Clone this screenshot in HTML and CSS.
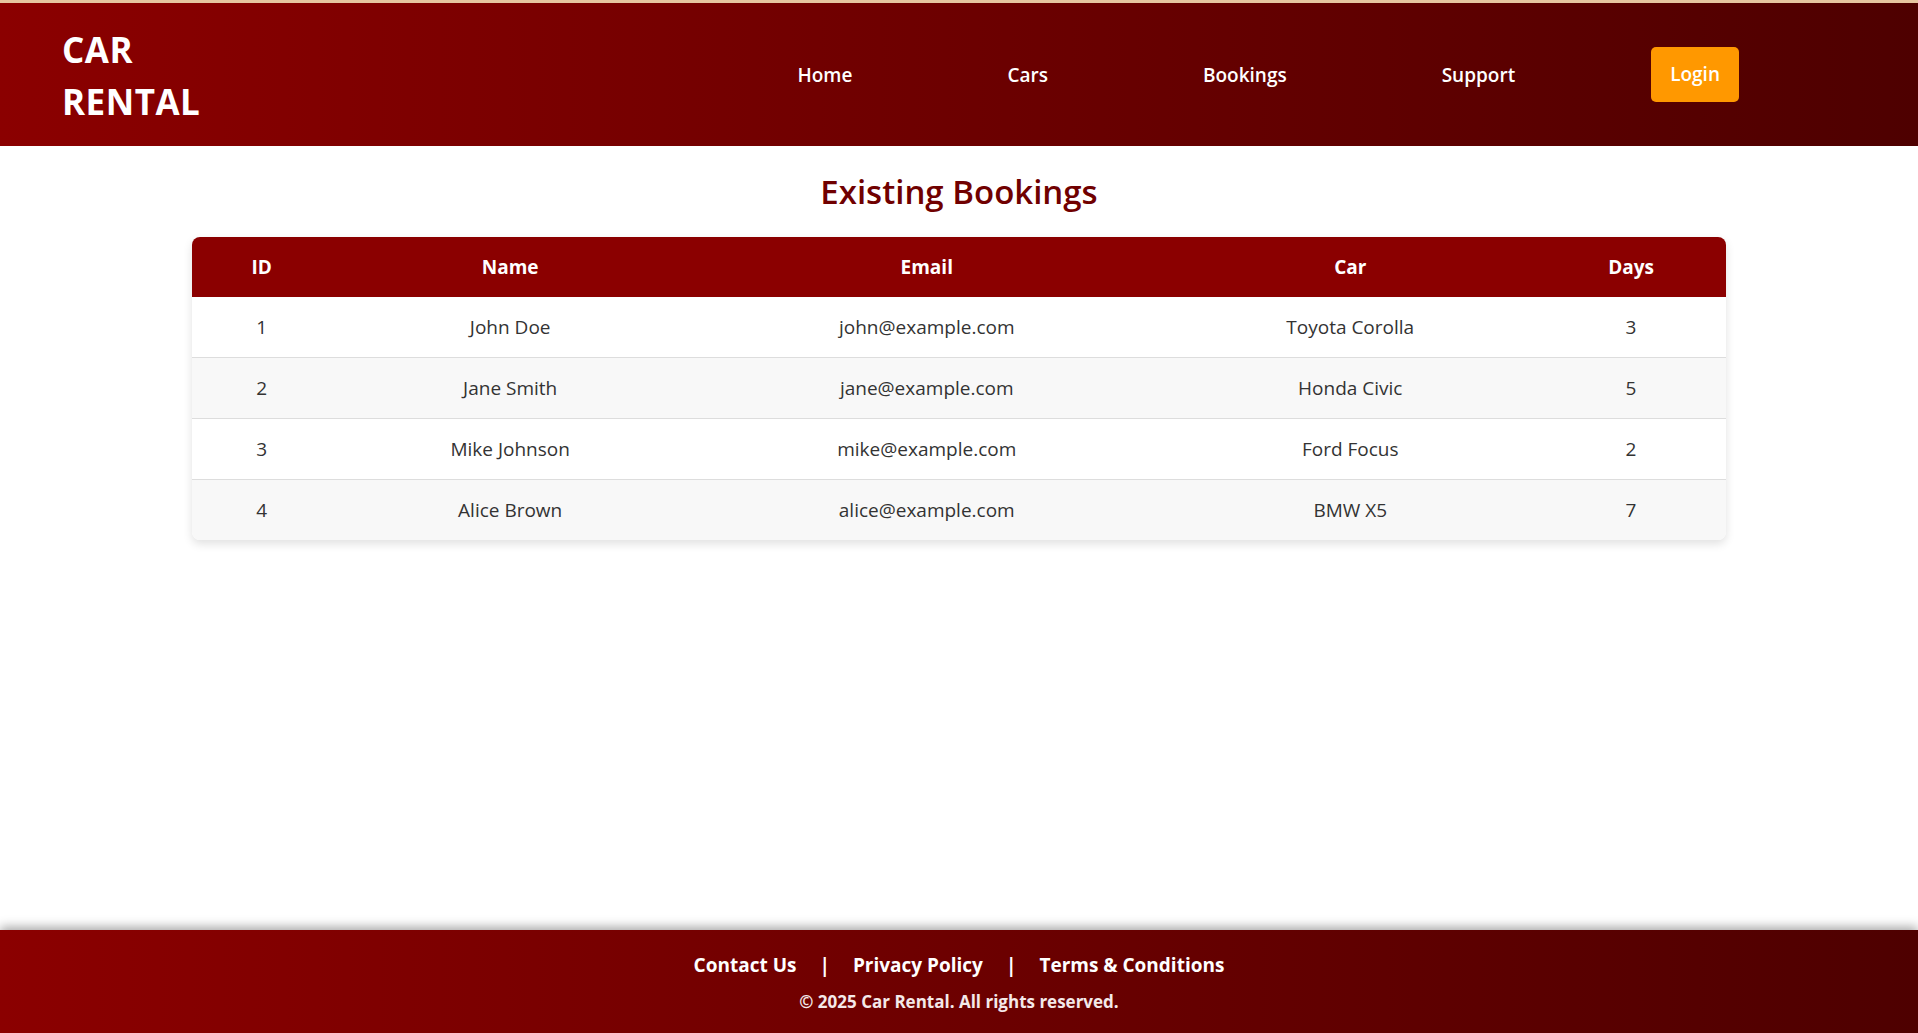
FILE: index.html
```html
<!DOCTYPE html>
<html lang="en">
<head>
<meta charset="utf-8">
<title>Car Rental - Bookings</title>
<link rel="stylesheet" href="styles.css">
</head>
<body>
<header class="site-header">
  <div class="logo">CAR RENTAL</div>
  <nav class="nav">
    <a class="nav-link" href="#">Home</a>
    <a class="nav-link" href="#">Cars</a>
    <a class="nav-link" href="#">Bookings</a>
    <a class="nav-link" href="#">Support</a>
    <a class="login-btn" href="#">Login</a>
  </nav>
</header>
<main class="content">
  <h2 class="page-title">Existing Bookings</h2>
  <table class="bookings">
    <colgroup>
      <col class="c-id"><col class="c-name"><col class="c-email"><col class="c-car"><col class="c-days">
    </colgroup>
    <thead>
      <tr><th>ID</th><th>Name</th><th>Email</th><th>Car</th><th>Days</th></tr>
    </thead>
    <tbody>
      <tr><td>1</td><td>John Doe</td><td>john@example.com</td><td>Toyota Corolla</td><td>3</td></tr>
      <tr><td>2</td><td>Jane Smith</td><td>jane@example.com</td><td>Honda Civic</td><td>5</td></tr>
      <tr><td>3</td><td>Mike Johnson</td><td>mike@example.com</td><td>Ford Focus</td><td>2</td></tr>
      <tr><td>4</td><td>Alice Brown</td><td>alice@example.com</td><td>BMW X5</td><td>7</td></tr>
    </tbody>
  </table>
</main>
<footer class="site-footer">
  <div class="footer-links">
    <a href="#">Contact Us</a><span class="sep">|</span><a href="#">Privacy Policy</a><span class="sep">|</span><a href="#">Terms &amp; Conditions</a>
  </div>
  <p class="copyright">&copy; 2025 Car Rental. All rights reserved.</p>
</footer>
</body>
</html>
```

FILE: styles.css
```css
* { box-sizing: border-box; }

html, body { height: 100%; }

body {
  margin: 0;
  font-family: "Open Sans", "Noto Sans", "Liberation Sans", sans-serif;
  color: #333;
  background: #fff;
  display: flex;
  flex-direction: column;
  min-height: 100vh;
  border-top: 3px solid #e6c6a0;
}

.site-header {
  height: 143px;
  background: linear-gradient(to right, #8b0000, #4e0000);
  display: flex;
  align-items: center;
  justify-content: space-between;
  padding: 0 179px 0 62px;
}

.logo {
  width: min-content;
  color: #fff;
  font-size: 35px;
  font-weight: 700;
  line-height: 52px;
  letter-spacing: 0.5px;
  margin-top: 2px;
}

.nav {
  display: flex;
  align-items: center;
  gap: 117px;
}

.nav-link {
  color: #fff;
  text-decoration: none;
  font-size: 19px;
  font-weight: 600;
  padding: 10px 19px;
}

.login-btn {
  display: inline-block;
  background: #ff9800;
  color: #fff;
  text-decoration: none;
  font-size: 19px;
  font-weight: 600;
  line-height: 27px;
  padding: 14px 19px;
  border-radius: 5px;
}

.content {
  flex: 1;
}

.page-title {
  margin: 25px 0 24px;
  text-align: center;
  color: #700000;
  font-size: 33px;
  font-weight: 600;
  line-height: 42px;
}

.bookings {
  width: 80%;
  margin: 0 auto;
  border-collapse: collapse;
  border-radius: 8px;
  overflow: hidden;
  box-shadow: 0 4px 10px rgba(0, 0, 0, 0.12);
  table-layout: fixed;
}

.c-id { width: 9.1%; }
.c-name { width: 23.3%; }
.c-email { width: 31%; }
.c-car { width: 24.2%; }
.c-days { width: 12.4%; }

.bookings th {
  background: #8b0000;
  color: #fff;
  font-size: 19px;
  font-weight: 700;
  line-height: 26px;
  padding: 17px 10px;
  text-align: center;
}

.bookings td {
  font-size: 19px;
  line-height: 26px;
  padding: 17px 10px;
  text-align: center;
  color: #333;
  border-bottom: 1px solid #ddd;
}

.bookings tbody tr:nth-child(even) td { background: #f8f8f8; }
.bookings tbody tr:last-child td { border-bottom: none; }

.site-footer {
  height: 103px;
  background: linear-gradient(to right, #8b0000, #4e0000);
  box-shadow: 0 -3px 10px rgba(0, 0, 0, 0.35);
  color: #fff;
  text-align: center;
  padding-top: 22px;
  font-weight: 700;
}

.footer-links {
  font-size: 19px;
  line-height: 26px;
}

.footer-links a {
  color: #fff;
  text-decoration: none;
}

.sep {
  margin: 0 23px;
}

.copyright {
  margin: 13px 0 0;
  font-size: 17px;
  line-height: 22px;
  color: #f4e9e9;
}
```
